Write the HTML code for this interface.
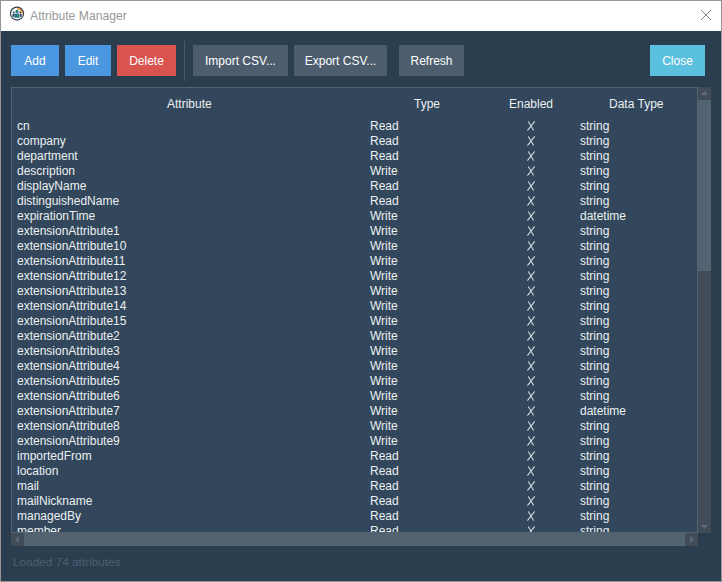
<!DOCTYPE html>
<html><head><meta charset="utf-8">
<style>
*{margin:0;padding:0;box-sizing:border-box}
html,body{width:722px;height:582px;overflow:hidden;background:#959595;font-family:"Liberation Sans",sans-serif;font-size:12px}
.win{position:absolute;left:1px;top:1px;width:720px;height:580px;background:#2b3e4f}
.title{position:absolute;left:0;top:0;width:720px;height:30px;background:#fff}
.ttext{position:absolute;left:29px;top:8px;line-height:15px;color:#999;font-size:12.2px;white-space:nowrap}
.icon{position:absolute;left:8px;top:5px}
.xclose{position:absolute;left:700px;top:9px}
.btn{position:absolute;top:44px;height:31px;line-height:33px;text-align:center;color:#fff;white-space:nowrap}
.sep{position:absolute;left:183px;top:40px;width:1px;height:40px;background:#4a5a6a}
.tbl{position:absolute;left:10px;top:86px;width:687px;height:446px;background:#32475c;border:1px solid #526371;overflow:hidden}
.hdr{position:absolute;top:9px;left:0;width:100%;height:15px;line-height:15px;color:#ecf0f1}
.hdr span,.r span{position:absolute;white-space:nowrap}
.r{position:absolute;left:0;width:100%;height:15px;line-height:15px;color:#ecf0f1}
.c1{left:5px}
.c2{left:358px}
.c3{position:absolute;left:515px;top:2px}
.c4{left:568px}
.sb{position:absolute;background:#414c58}
.th{position:absolute;background:#546371}
.status{position:absolute;left:12px;top:554px;line-height:15px;color:#4d5e6f;font-size:11.8px;white-space:nowrap}
</style></head><body>
<div class="win">
 <div class="title">
  <svg class="icon" width="16" height="17" viewBox="0 0 16 17">
   <circle cx="8" cy="7.6" r="6.5" fill="#fff" stroke="#2c3e50" stroke-width="1.2"/>
   <path d="M8.3 2.6 A5 5 0 0 1 13.2 7.6" stroke="#ef8f2a" stroke-width="1.7" fill="none"/>
   <circle cx="4.8" cy="6.6" r="1" fill="#2c3e50"/>
   <circle cx="11.3" cy="6.6" r="1" fill="#2c3e50"/>
   <rect x="3.5" y="8" width="1.7" height="2.8" fill="#2c3e50"/>
   <rect x="10.9" y="8" width="1.7" height="2.8" fill="#2c3e50"/>
   <circle cx="8" cy="5.4" r="1.6" fill="#2a7a82"/>
   <path d="M5.2 11.8 V8.6 Q5.2 7.6 6.2 7.6 H9.6 Q10.5 7.6 10.5 8.6 V11.8 Z" fill="#2a7a82"/>
  </svg>
  <div class="ttext">Attribute Manager</div>
  <svg class="xclose" width="10" height="10" fill="#858585" shape-rendering="crispEdges"><rect x="0" y="0" width="1" height="1"/><rect x="9" y="0" width="1" height="1"/><rect x="1" y="1" width="1" height="1"/><rect x="8" y="1" width="1" height="1"/><rect x="2" y="2" width="1" height="1"/><rect x="7" y="2" width="1" height="1"/><rect x="3" y="3" width="1" height="1"/><rect x="6" y="3" width="1" height="1"/><rect x="4" y="4" width="1" height="1"/><rect x="5" y="4" width="1" height="1"/><rect x="5" y="5" width="1" height="1"/><rect x="4" y="5" width="1" height="1"/><rect x="6" y="6" width="1" height="1"/><rect x="3" y="6" width="1" height="1"/><rect x="7" y="7" width="1" height="1"/><rect x="2" y="7" width="1" height="1"/><rect x="8" y="8" width="1" height="1"/><rect x="1" y="8" width="1" height="1"/><rect x="9" y="9" width="1" height="1"/><rect x="0" y="9" width="1" height="1"/></svg>
 </div>
 <div class="btn" style="left:10px;width:48px;background:#4a97e0">Add</div>
 <div class="btn" style="left:64px;width:46px;background:#4a97e0">Edit</div>
 <div class="btn" style="left:116px;width:59px;background:#d9534f">Delete</div>
 <div class="sep"></div>
 <div class="btn" style="left:192px;width:95px;background:#4d5d6d">Import CSV...</div>
 <div class="btn" style="left:293px;width:93px;background:#4d5d6d">Export CSV...</div>
 <div class="btn" style="left:398px;width:65px;background:#4d5d6d">Refresh</div>
 <div class="btn" style="left:649px;width:55px;background:#5bc0de">Close</div>
 <div class="tbl">
  <div class="hdr"><span style="left:155px">Attribute</span><span style="left:402px">Type</span><span style="left:497px">Enabled</span><span style="left:597px">Data Type</span></div>
<div class="r" style="top:31px"><span class="c1">cn</span><span class="c2">Read</span><svg class="c3" width="9" height="11"><path d="M1.3 0.4 L6.6 9.6 M7.7 0.4 L0.4 9.6" stroke="#d3dae0" stroke-width="1.05" fill="none"/></svg><span class="c4">string</span></div>
<div class="r" style="top:46px"><span class="c1">company</span><span class="c2">Read</span><svg class="c3" width="9" height="11"><path d="M1.3 0.4 L6.6 9.6 M7.7 0.4 L0.4 9.6" stroke="#d3dae0" stroke-width="1.05" fill="none"/></svg><span class="c4">string</span></div>
<div class="r" style="top:61px"><span class="c1">department</span><span class="c2">Read</span><svg class="c3" width="9" height="11"><path d="M1.3 0.4 L6.6 9.6 M7.7 0.4 L0.4 9.6" stroke="#d3dae0" stroke-width="1.05" fill="none"/></svg><span class="c4">string</span></div>
<div class="r" style="top:76px"><span class="c1">description</span><span class="c2">Write</span><svg class="c3" width="9" height="11"><path d="M1.3 0.4 L6.6 9.6 M7.7 0.4 L0.4 9.6" stroke="#d3dae0" stroke-width="1.05" fill="none"/></svg><span class="c4">string</span></div>
<div class="r" style="top:91px"><span class="c1">displayName</span><span class="c2">Read</span><svg class="c3" width="9" height="11"><path d="M1.3 0.4 L6.6 9.6 M7.7 0.4 L0.4 9.6" stroke="#d3dae0" stroke-width="1.05" fill="none"/></svg><span class="c4">string</span></div>
<div class="r" style="top:106px"><span class="c1">distinguishedName</span><span class="c2">Read</span><svg class="c3" width="9" height="11"><path d="M1.3 0.4 L6.6 9.6 M7.7 0.4 L0.4 9.6" stroke="#d3dae0" stroke-width="1.05" fill="none"/></svg><span class="c4">string</span></div>
<div class="r" style="top:121px"><span class="c1">expirationTime</span><span class="c2">Write</span><svg class="c3" width="9" height="11"><path d="M1.3 0.4 L6.6 9.6 M7.7 0.4 L0.4 9.6" stroke="#d3dae0" stroke-width="1.05" fill="none"/></svg><span class="c4">datetime</span></div>
<div class="r" style="top:136px"><span class="c1">extensionAttribute1</span><span class="c2">Write</span><svg class="c3" width="9" height="11"><path d="M1.3 0.4 L6.6 9.6 M7.7 0.4 L0.4 9.6" stroke="#d3dae0" stroke-width="1.05" fill="none"/></svg><span class="c4">string</span></div>
<div class="r" style="top:151px"><span class="c1">extensionAttribute10</span><span class="c2">Write</span><svg class="c3" width="9" height="11"><path d="M1.3 0.4 L6.6 9.6 M7.7 0.4 L0.4 9.6" stroke="#d3dae0" stroke-width="1.05" fill="none"/></svg><span class="c4">string</span></div>
<div class="r" style="top:166px"><span class="c1">extensionAttribute11</span><span class="c2">Write</span><svg class="c3" width="9" height="11"><path d="M1.3 0.4 L6.6 9.6 M7.7 0.4 L0.4 9.6" stroke="#d3dae0" stroke-width="1.05" fill="none"/></svg><span class="c4">string</span></div>
<div class="r" style="top:181px"><span class="c1">extensionAttribute12</span><span class="c2">Write</span><svg class="c3" width="9" height="11"><path d="M1.3 0.4 L6.6 9.6 M7.7 0.4 L0.4 9.6" stroke="#d3dae0" stroke-width="1.05" fill="none"/></svg><span class="c4">string</span></div>
<div class="r" style="top:196px"><span class="c1">extensionAttribute13</span><span class="c2">Write</span><svg class="c3" width="9" height="11"><path d="M1.3 0.4 L6.6 9.6 M7.7 0.4 L0.4 9.6" stroke="#d3dae0" stroke-width="1.05" fill="none"/></svg><span class="c4">string</span></div>
<div class="r" style="top:211px"><span class="c1">extensionAttribute14</span><span class="c2">Write</span><svg class="c3" width="9" height="11"><path d="M1.3 0.4 L6.6 9.6 M7.7 0.4 L0.4 9.6" stroke="#d3dae0" stroke-width="1.05" fill="none"/></svg><span class="c4">string</span></div>
<div class="r" style="top:226px"><span class="c1">extensionAttribute15</span><span class="c2">Write</span><svg class="c3" width="9" height="11"><path d="M1.3 0.4 L6.6 9.6 M7.7 0.4 L0.4 9.6" stroke="#d3dae0" stroke-width="1.05" fill="none"/></svg><span class="c4">string</span></div>
<div class="r" style="top:241px"><span class="c1">extensionAttribute2</span><span class="c2">Write</span><svg class="c3" width="9" height="11"><path d="M1.3 0.4 L6.6 9.6 M7.7 0.4 L0.4 9.6" stroke="#d3dae0" stroke-width="1.05" fill="none"/></svg><span class="c4">string</span></div>
<div class="r" style="top:256px"><span class="c1">extensionAttribute3</span><span class="c2">Write</span><svg class="c3" width="9" height="11"><path d="M1.3 0.4 L6.6 9.6 M7.7 0.4 L0.4 9.6" stroke="#d3dae0" stroke-width="1.05" fill="none"/></svg><span class="c4">string</span></div>
<div class="r" style="top:271px"><span class="c1">extensionAttribute4</span><span class="c2">Write</span><svg class="c3" width="9" height="11"><path d="M1.3 0.4 L6.6 9.6 M7.7 0.4 L0.4 9.6" stroke="#d3dae0" stroke-width="1.05" fill="none"/></svg><span class="c4">string</span></div>
<div class="r" style="top:286px"><span class="c1">extensionAttribute5</span><span class="c2">Write</span><svg class="c3" width="9" height="11"><path d="M1.3 0.4 L6.6 9.6 M7.7 0.4 L0.4 9.6" stroke="#d3dae0" stroke-width="1.05" fill="none"/></svg><span class="c4">string</span></div>
<div class="r" style="top:301px"><span class="c1">extensionAttribute6</span><span class="c2">Write</span><svg class="c3" width="9" height="11"><path d="M1.3 0.4 L6.6 9.6 M7.7 0.4 L0.4 9.6" stroke="#d3dae0" stroke-width="1.05" fill="none"/></svg><span class="c4">string</span></div>
<div class="r" style="top:316px"><span class="c1">extensionAttribute7</span><span class="c2">Write</span><svg class="c3" width="9" height="11"><path d="M1.3 0.4 L6.6 9.6 M7.7 0.4 L0.4 9.6" stroke="#d3dae0" stroke-width="1.05" fill="none"/></svg><span class="c4">datetime</span></div>
<div class="r" style="top:331px"><span class="c1">extensionAttribute8</span><span class="c2">Write</span><svg class="c3" width="9" height="11"><path d="M1.3 0.4 L6.6 9.6 M7.7 0.4 L0.4 9.6" stroke="#d3dae0" stroke-width="1.05" fill="none"/></svg><span class="c4">string</span></div>
<div class="r" style="top:346px"><span class="c1">extensionAttribute9</span><span class="c2">Write</span><svg class="c3" width="9" height="11"><path d="M1.3 0.4 L6.6 9.6 M7.7 0.4 L0.4 9.6" stroke="#d3dae0" stroke-width="1.05" fill="none"/></svg><span class="c4">string</span></div>
<div class="r" style="top:361px"><span class="c1">importedFrom</span><span class="c2">Read</span><svg class="c3" width="9" height="11"><path d="M1.3 0.4 L6.6 9.6 M7.7 0.4 L0.4 9.6" stroke="#d3dae0" stroke-width="1.05" fill="none"/></svg><span class="c4">string</span></div>
<div class="r" style="top:376px"><span class="c1">location</span><span class="c2">Read</span><svg class="c3" width="9" height="11"><path d="M1.3 0.4 L6.6 9.6 M7.7 0.4 L0.4 9.6" stroke="#d3dae0" stroke-width="1.05" fill="none"/></svg><span class="c4">string</span></div>
<div class="r" style="top:391px"><span class="c1">mail</span><span class="c2">Read</span><svg class="c3" width="9" height="11"><path d="M1.3 0.4 L6.6 9.6 M7.7 0.4 L0.4 9.6" stroke="#d3dae0" stroke-width="1.05" fill="none"/></svg><span class="c4">string</span></div>
<div class="r" style="top:406px"><span class="c1">mailNickname</span><span class="c2">Read</span><svg class="c3" width="9" height="11"><path d="M1.3 0.4 L6.6 9.6 M7.7 0.4 L0.4 9.6" stroke="#d3dae0" stroke-width="1.05" fill="none"/></svg><span class="c4">string</span></div>
<div class="r" style="top:421px"><span class="c1">managedBy</span><span class="c2">Read</span><svg class="c3" width="9" height="11"><path d="M1.3 0.4 L6.6 9.6 M7.7 0.4 L0.4 9.6" stroke="#d3dae0" stroke-width="1.05" fill="none"/></svg><span class="c4">string</span></div>
<div class="r" style="top:436px"><span class="c1">member</span><span class="c2">Read</span><svg class="c3" width="9" height="11"><path d="M1.3 0.4 L6.6 9.6 M7.7 0.4 L0.4 9.6" stroke="#d3dae0" stroke-width="1.05" fill="none"/></svg><span class="c4">string</span></div>
 </div>
 <div class="sb" style="left:697px;top:86px;width:13px;height:446px"></div>
 <div class="th" style="left:696px;top:99px;width:14px;height:171px"></div>
 <div class="sb" style="left:10px;top:532px;width:687px;height:13px"></div>
 <div class="th" style="left:23px;top:531px;width:661px;height:14px"></div>
 <svg style="position:absolute;left:697px;top:86px" width="13" height="13"><path d="M3 8 L6.5 4 L10 8 Z" fill="#5a6a7a"/></svg>
 <svg style="position:absolute;left:697px;top:519px" width="13" height="13"><path d="M3 5 L6.5 9 L10 5 Z" fill="#5a6a7a"/></svg>
 <svg style="position:absolute;left:10px;top:532px" width="13" height="13"><path d="M8 3 L4 6.5 L8 10 Z" fill="#5a6a7a"/></svg>
 <svg style="position:absolute;left:684px;top:532px" width="13" height="13"><path d="M5 3 L9 6.5 L5 10 Z" fill="#5a6a7a"/></svg>
 <div class="status">Loaded 74 attributes</div>
</div>
</body></html>
